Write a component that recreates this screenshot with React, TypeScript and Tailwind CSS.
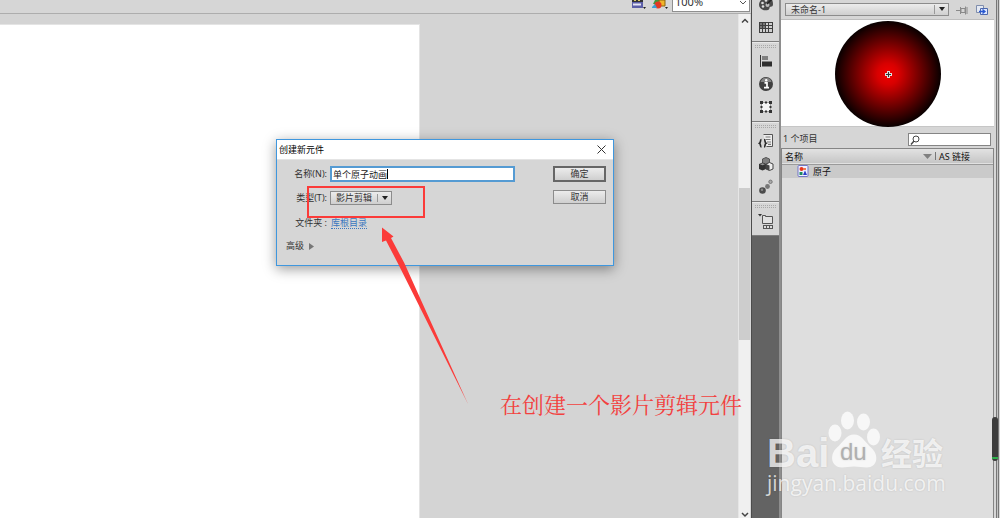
import type { ReactNode } from "react";

const ui = "font-['Noto_Sans','Noto_Sans_CJK_SC',sans-serif]";
const bevel = "border border-[#8c8c8c] bg-linear-to-b from-[#ececec] to-[#cfcfcf]";

function Icon({ children, size = 16 }: { children: ReactNode; size?: number }) {
  return (
    <svg width={size} height={size} viewBox="0 0 16 16" fill="none" aria-hidden="true">
      {children}
    </svg>
  );
}

const PaletteIcon = () => (
  <Icon>
    <path d="M13 1C9-1 1 3 1 9c0 4 5 6 9 5 2-.6 1-2.500 2-3s3 0 3-3c0-2-1-5-2-7z" fill="#4a4a4a" />
    <circle cx="4.500" cy="7" r="1.300" fill="#ddd" />
    <circle cx="8" cy="4.500" r="1.300" fill="#ddd" />
    <circle cx="5" cy="10.500" r="1.300" fill="#ddd" />
    <circle cx="9.500" cy="9" r="2" fill="#bbb" />
    <path d="M9 8l6-6" stroke="#222" strokeWidth="1.500" />
  </Icon>
);

const SwatchesIcon = () => (
  <Icon>
    <rect x="1" y="3" width="14" height="11" fill="#3e3e3e" />
    <path d="M2 4h2v2H2zM5 4h2v2H5zM5 7h2v2H5zM2 7h2v2H2z" fill="#777" />
    <path d="M8 4h2v2H8zM11 4h3v2h-3zM8 7h2v2H8zM11 7h3v2h-3zM8 10h2v3H8zM11 10h3v3h-3zM5 10h2v3H5zM2 10h2v3H2z" fill="#cfcfcf" />
  </Icon>
);

const AlignIcon = () => (
  <Icon>
    <path d="M2.500 2v12" stroke="#333" />
    <rect x="4" y="3" width="6" height="4" fill="#808080" />
    <rect x="4" y="8.500" width="10" height="5" fill="#2e2e2e" />
  </Icon>
);

const InfoIcon = () => (
  <Icon>
    <circle cx="8" cy="8" r="7" fill="#404040" />
    <path d="M2.500 6a5.700 5.700 0 0 1 11 0" fill="#858585" />
    <path d="M6.500 6.800H9v4.700M6 11.700h5" stroke="#fff" strokeWidth="1.700" />
    <circle cx="8.200" cy="4.200" r="1.200" fill="#fff" />
  </Icon>
);

const TransformIcon = () => (
  <Icon>
    <rect x="3.500" y="3.500" width="9" height="9" fill="#f4f4f4" stroke="#555" strokeDasharray="1 1" />
    <path d="M2 2h3v3H2zM11 2h3v3h-3zM2 11h3v3H2zM11 11h3v3h-3zM7 2.500h2v2H7zM7 11.500h2v2H7zM2.500 7h2v2h-2zM11.500 7h2v2h-2z" fill="#333" />
  </Icon>
);

const SnippetIcon = () => (
  <Icon>
    <path d="M5.500 1.500h9v12h-6" fill="#eee" stroke="#555" />
    <path d="M7.500 4h5M7.500 6.500h5M9 9h4M10 11.300h3" stroke="#777" strokeWidth="1.200" />
    <path d="M3.500 6.500c-1.500 0-.5 3-2 3.800 1.500.8.500 3.700 2 3.700M6 6.500c1.500 0 .5 3 2 3.800-1.500.8-.5 3.700-2 3.700" stroke="#2a2a2a" strokeWidth="1.700" />
  </Icon>
);

const ComponentsIcon = () => (
  <Icon>
    <path d="M8 1.500l3.500 1.500v4L8 8.500 4.500 7V3z" fill="#808080" stroke="#555" />
    <path d="M4.500 6.500L8 8v5l-3.500 1.500L1 13V8z" fill="#333" />
    <path d="M2 8.300l2.500-1L7 8.300l-2.500 1z" fill="#999" />
    <path d="M11.500 6.500L15 8v5l-3.500 1.500L8 13V8z" fill="#eee" stroke="#444" />
    <path d="M8 8l3.500 1.500v5L8 13z" fill="#444" />
  </Icon>
);

const MotionIcon = () => (
  <Icon>
    <circle cx="4.500" cy="11.500" r="3.300" fill="#4c4c4c" />
    <circle cx="4" cy="10.800" r="1.200" fill="#8a8a8a" />
    <circle cx="9.500" cy="7.500" r="2.400" fill="#777" />
    <circle cx="12.500" cy="2.800" r="1.700" fill="#aaa" stroke="#777" />
  </Icon>
);

const ProjectIcon = () => (
  <svg width="18" height="18" viewBox="0 0 18 18" fill="none" aria-hidden="true">
    <path d="M1 2h4L3 4.500z" fill="#333" />
    <path d="M5.500 3.500h3v1h7v7h-10z" fill="#e2e2e2" stroke="#555" />
    <path d="M6 13h10v4H6z" fill="#555" />
    <path d="M7 14h2v2H7zM10 14h2v2h-2zM13 14h2v2h-2z" fill="#ddd" />
  </svg>
);

function DockGroup({ items, grip = true }: { items: [string, () => ReactNode][]; grip?: boolean }) {
  return (
    <div className="flex flex-col items-center border-b border-[#7d7d7d] bg-[#d6d6d6] pb-[3px]">
      {grip && (
        <div className="flex h-[7px] w-full items-center border-t border-[#e8e8e8] px-[3px]">
          <div className="h-[3px] w-full border-y border-dotted border-[#a8a8a8]" />
        </div>
      )}
      {items.map(([label, Glyph]) => (
        <button key={label} type="button" aria-label={label} className="flex h-[23px] w-full items-center justify-center">
          <Glyph />
        </button>
      ))}
    </div>
  );
}

function Toolbar() {
  return (
    <header className="flex h-[14px] items-start justify-end overflow-hidden border-b border-[#adadad] bg-[#d6d6d6]">
      <button type="button" aria-label="编辑场景" className="mr-1 h-[10px]">
        <svg width="17" height="10" viewBox="0 0 17 10" aria-hidden="true">
          <path d="M2 0h11v2H2z" fill="#333" />
          <path d="M4 0h2v1H4zM8 0h2v1H8z" fill="#d8c86a" />
          <path d="M2 2h11v6H2z" fill="#5c5fa8" />
          <path d="M3 3.500h8v2H3z" fill="#e6e6f5" />
          <path d="M13 7h3l-1.500 2z" fill="#222" />
        </svg>
      </button>
      <button type="button" aria-label="编辑元件" className="mr-[3px] h-[10px]">
        <svg width="18" height="10" viewBox="0 0 18 10" aria-hidden="true">
          <path d="M4 0h5L6 4H2z" fill="#3f9a3e" />
          <path d="M8 0h6v6H8z" fill="#f0b429" stroke="#8a6410" />
          <circle cx="7" cy="5" r="3.500" fill="#e33a24" />
          <path d="M1 7l3-3 2 4H1z" fill="#3ba0d8" />
          <path d="M14 7h3l-1.500 2z" fill="#222" />
        </svg>
      </button>
      <div className="relative mr-px h-3 w-[78px] overflow-hidden border border-t-0 border-[#8f8f8f] bg-white">
        <select aria-label="缩放" className={`-mt-[6px] block h-4 w-full appearance-none pl-[2px] text-[11px] leading-4 text-[#333] ${ui}`}>
          <option>100%</option>
        </select>
        <svg className="pointer-events-none absolute top-0 right-[2px]" width="8" height="6" viewBox="0 0 8 6" fill="none" aria-hidden="true">
          <path d="M1 1l3 3 3-3" stroke="#555" />
        </svg>
      </div>
    </header>
  );
}

function Scrollbar() {
  return (
    <div className="flex w-[13px] shrink-0 flex-col items-center border-x border-l-[#e6e6e6] border-r-[#d6d6d6] bg-[#f0f0f0]">
      <svg width="8" height="14" viewBox="0 0 8 14" fill="none" aria-hidden="true">
        <path d="M1 8.500l3-3 3 3" stroke="#444" strokeWidth="1.500" />
      </svg>
      <div className="h-40 shrink-0" />
      <div className="h-[152px] w-full shrink-0 bg-[#cdcdcd]" />
      <svg className="mt-auto" width="8" height="6" viewBox="0 0 8 6" fill="none" aria-hidden="true">
        <path d="M1 1l3 3 3-3" stroke="#444" strokeWidth="1.500" />
      </svg>
    </div>
  );
}

function Dock() {
  return (
    <aside className="flex w-7 shrink-0 flex-col overflow-hidden border-l border-[#4c4c4c] bg-[#636363]">
      <div className="-mt-2">
        <DockGroup grip={false} items={[["颜色", PaletteIcon], ["样本", SwatchesIcon]]} />
        <DockGroup items={[["对齐", AlignIcon], ["信息", InfoIcon], ["变形", TransformIcon]]} />
        <DockGroup items={[["代码片断", SnippetIcon], ["组件", ComponentsIcon], ["动画预设", MotionIcon]]} />
        <DockGroup items={[["项目", ProjectIcon]]} />
      </div>
    </aside>
  );
}

function LibraryPanel() {
  return (
    <aside className="flex w-[221px] shrink-0 border-l-2 border-[#8e8e8e] bg-[#d6d6d6] text-[9px] text-[#333]">
      <div className="flex min-w-0 flex-1 flex-col">
        <div className="flex h-5 items-center border-b border-[#bdbdbd] pl-1">
          <div className={`relative mb-px h-[13px] w-[164px] ${bevel}`}>
            <select aria-label="文档" className="block h-[11px] w-full appearance-none pl-[5px] text-[9px] leading-[11px]">
              <option>未命名-1</option>
            </select>
            <div className="pointer-events-none absolute inset-y-px right-0 flex w-[14px] items-center justify-center border-l border-[#999]">
              <svg width="6" height="4" viewBox="0 0 6 4" aria-hidden="true"><path d="M0 0h6L3 4z" fill="#222" /></svg>
            </div>
          </div>
          <button type="button" aria-label="固定当前库" className="ml-[7px]">
            <svg width="12" height="12" viewBox="0 0 12 12" fill="none" aria-hidden="true">
              <path d="M0 6.500h4M4.500 3v7M5 4.500h4v4H5zM9.500 2.500v8M11 3v7" stroke="#8a8a8a" />
            </svg>
          </button>
          <button type="button" aria-label="新建库面板" className="ml-2">
            <svg width="12" height="12" viewBox="0 0 12 12" fill="none" aria-hidden="true">
              <path d="M.5 1.500h7v7h-7z" fill="#e4e9f2" stroke="#7f8dac" />
              <path d="M4.500 4.500h7v6h-7z" fill="#dfe9ff" stroke="#4d68ad" />
              <path d="M3 7.500h5M6.500 5.500l2.500 2-2.500 2" stroke="#2857d0" strokeWidth="1.300" />
            </svg>
          </button>
        </div>
        <div className="flex h-[107px] justify-center border-b border-[#c6c6c6] bg-white pt-px">
          <svg width="106" height="106" viewBox="0 0 106 106" aria-hidden="true">
            <defs>
              <radialGradient id="atom">
                <stop offset="0" stopColor="#f20000" />
                <stop offset="0.200" stopColor="#d80000" />
                <stop offset="1" stopColor="#080000" />
              </radialGradient>
            </defs>
            <circle cx="53" cy="53" r="53" fill="url(#atom)" />
            <path d="M53.500 50v7M50 53.500h7" stroke="#ddd" strokeWidth="3" />
            <path d="M53.500 51v5M51 53.500h5" stroke="#333" />
          </svg>
        </div>
        <div className="flex h-[21px] items-center justify-between pt-[3px] pr-[3px] pl-[2px]">
          <span>1 个项目</span>
          <div className="relative h-[13px] w-[83px]">
            <input type="search" aria-label="搜索" className="block h-full w-full border border-[#858585] bg-white pl-4 outline-none" />
            <svg className="pointer-events-none absolute top-[2px] left-[2px]" width="10" height="10" viewBox="0 0 10 10" fill="none" aria-hidden="true">
              <circle cx="6" cy="4" r="3" stroke="#444" />
              <path d="M4 6L1 9.500" stroke="#444" strokeWidth="1.400" />
            </svg>
          </div>
        </div>
        <div className="flex-1 border border-b-0 border-[#858585] bg-[#dedede]">
          <table className="w-full table-fixed text-left">
            <thead>
              <tr className="h-[15px] border-b border-[#9a9a9a] bg-linear-to-b from-[#e2e2e2] to-[#c6c6c6]">
                <th className="p-0 pl-[3px] font-normal text-[#111]">
                  <div className="flex h-[14px] items-center justify-between">
                    名称
                    <svg width="9" height="5" viewBox="0 0 9 5" aria-hidden="true"><path d="M0 0h9L4.500 5z" fill="#808080" /></svg>
                  </div>
                </th>
                <th className="w-[61px] p-0 pl-[3px] font-normal text-[#111]">
                  <div className="flex h-[14px] items-center">
                    <span className="mr-[3px] h-2 border-l border-[#777]" />
                    AS 链接
                  </div>
                </th>
              </tr>
            </thead>
            <tbody>
              <tr className="h-[14px] bg-[#cacaca]">
                <td colSpan={2} className="p-0 pl-[15px] text-[#111]">
                  <div className="flex h-[13px] items-center gap-1">
                    <svg width="12" height="12" viewBox="0 0 12 12" aria-hidden="true">
                      <rect x="1" y=".5" width="10" height="11" rx="1" fill="#eef0ff" stroke="#7276c4" />
                      <circle cx="4.500" cy="4" r="2" fill="#e8331c" />
                      <path d="M6 3h3v2H6z" fill="#f07a52" />
                      <path d="M2.500 7h3v3h-3z" fill="#1f8a5c" />
                      <path d="M8 5.500l2 4.500H6z" fill="#2a3fc8" />
                    </svg>
                    原子
                  </div>
                </td>
              </tr>
            </tbody>
          </table>
        </div>
      </div>
      <div className="relative flex w-[6px] shrink-0 justify-end pr-px">
        <div className="w-[3px] border-x border-[#777] bg-[#c4c4c4]" />
        <div className="absolute right-[2px] bottom-[57px] flex h-11 w-[6px] items-end overflow-hidden rounded-sm bg-[#3d3d3d]">
          <div className="mb-[2px] h-[2px] w-full bg-[#2fae4b]" />
        </div>
      </div>
    </aside>
  );
}

function SymbolDialog() {
  return (
    <form
      aria-label="创建新元件"
      className="absolute top-[139px] left-[276px] flex h-[127px] w-[338px] flex-col border border-[#3f97de] bg-[#d6d6d6] text-[9px] leading-3 text-[#333] shadow-[0_3px_12px_rgba(0,0,0,0.4)]"
    >
      <div className="flex h-5 items-center justify-between border-b border-[#e4e4e4] bg-white pr-[7px] pl-[2px]">
        <h1 className="text-black">创建新元件</h1>
        <button type="button" aria-label="关闭">
          <svg width="9" height="9" viewBox="0 0 9 9" fill="none" aria-hidden="true">
            <path d="M.5.5l8 8M8.500.5l-8 8" stroke="#333" />
          </svg>
        </button>
      </div>
      <div className="flex flex-1 items-start justify-between pt-[6px] pr-[7px] pl-[9px]">
        <div>
          <div className="grid grid-cols-[41px_185px] items-center gap-x-[3px]">
            <label htmlFor="name" className="text-right whitespace-nowrap">名称(N):</label>
            <div className="relative h-4">
              <input id="name" defaultValue="单个原子动画" className="block h-4 w-full border-2 border-[#559bd3] bg-white px-px text-[9px] text-[#222] outline-none" />
              <span className="absolute top-[3px] left-[57px] h-[10px] w-px bg-black" />
            </div>
            <label htmlFor="type" className="flex h-8 items-center justify-end whitespace-nowrap">类型(T):</label>
            <div className={`relative h-[14px] w-[62px] ${bevel}`}>
              <select id="type" className="block h-3 w-full appearance-none pl-[5px] text-[9px] leading-3">
                <option>影片剪辑</option>
              </select>
              <div className="pointer-events-none absolute inset-y-[2px] right-0 flex w-[14px] items-center justify-center border-l border-[#999]">
                <svg width="6" height="4" viewBox="0 0 6 4" aria-hidden="true"><path d="M0 0h6L3 4z" fill="#222" /></svg>
              </div>
            </div>
            <span className="flex h-[18px] items-center justify-end whitespace-nowrap">文件夹 :</span>
            <a href="#root" className="ml-px justify-self-start border-b border-dotted border-[#3c78bf] leading-[10px] text-[#3c78bf]">库根目录</a>
          </div>
          <button type="button" className="mt-2 flex items-center gap-[5px]">
            高级
            <svg width="5" height="7" viewBox="0 0 5 7" aria-hidden="true"><path d="M0 0l5 3.500L0 7z" fill="#777" /></svg>
          </button>
        </div>
        <div className="flex w-[53px] flex-col gap-2">
          <button type="submit" className="h-4 border-2 border-[#666] bg-linear-to-b from-[#ececec] to-[#cfcfcf]">确定</button>
          <button type="button" className={`h-[14px] ${bevel}`}>取消</button>
        </div>
      </div>
    </form>
  );
}

function Annotation() {
  return (
    <>
      <div className="absolute top-[186px] left-[307px] h-8 w-[118px] border-2 border-[#fb3b39]" />
      <svg className="absolute top-[226px] left-[380px]" width="90" height="180" viewBox="0 0 90 180" aria-hidden="true">
        <path d="M2 1.500L13.500 10.500L11 12L24.300 37L42.300 77L88 178L37.700 77L17.700 37L6 14.500L2 16z" fill="#fb3b39" />
      </svg>
      <p className="absolute top-[388px] left-[500px] font-['Noto_Serif_CJK_SC','Noto_Sans_CJK_SC',serif] text-[22px] leading-8 whitespace-nowrap text-[#f2413f]">
        在创建一个影片剪辑元件
      </p>
    </>
  );
}

function Watermark() {
  return (
    <div className="pointer-events-none absolute top-[410px] left-[767px] text-white/75 text-shadow-[0_0_2px_rgba(0,0,0,0.15)]">
      <div className="flex h-[60px] items-end">
        <span className="w-[60px] font-['Liberation_Sans',sans-serif] text-[40px] leading-[34px] font-bold">Bai</span>
        <div className="relative h-[60px] w-[54px]">
          <svg width="54" height="60" viewBox="0 0 54 60" fill="currentColor" aria-hidden="true">
            <ellipse cx="8" cy="23" rx="6.500" ry="8.500" />
            <ellipse cx="20.500" cy="10.500" rx="6.500" ry="9" />
            <ellipse cx="36.500" cy="12" rx="6.500" ry="8.500" />
            <ellipse cx="46.500" cy="27" rx="6.500" ry="8.500" />
            <path d="M27 24.500c8 0 11 8 17 13 9 8 6 20-4 20-5 0-8-1-13-1s-8 1-12 1c-11 0-13-13-5-20 6-5 9-13 17-13z" />
          </svg>
          <span className="absolute top-6 left-[13px] font-['Liberation_Sans',sans-serif] text-[24px] leading-9 text-[#b0b0b0]">du</span>
        </div>
        <span className="font-['Noto_Sans_CJK_SC',sans-serif] text-[31px] leading-[36px] font-bold">经验</span>
      </div>
      <p className="font-['Open_Sans',sans-serif] text-[21px] leading-[26px]">jingyan.baidu.com</p>
    </div>
  );
}

export default function App() {
  return (
    <div className={`relative flex h-screen overflow-hidden bg-[#d4d4d4] ${ui}`}>
      <main className="flex min-w-0 flex-1 flex-col">
        <Toolbar />
        <div className="flex min-h-0 flex-1">
          <div className="flex min-w-0 flex-1 pt-[10px]">
            <div className="w-[420px] border-t border-r border-[#e4e4e4] bg-white" />
          </div>
          <Scrollbar />
        </div>
      </main>
      <Dock />
      <LibraryPanel />
      <SymbolDialog />
      <Annotation />
      <Watermark />
    </div>
  );
}
